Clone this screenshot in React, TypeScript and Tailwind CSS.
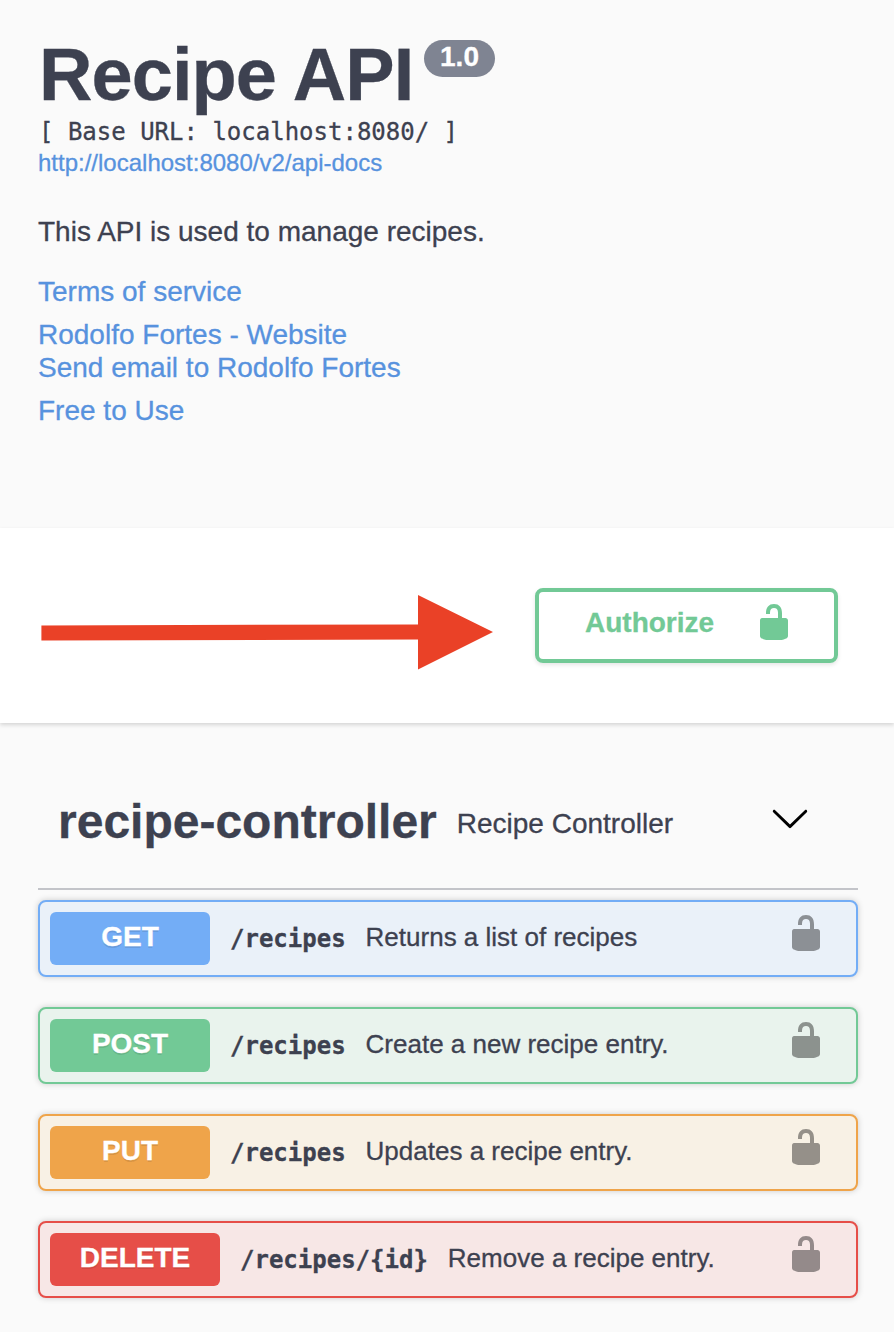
import React from "react";

const LOCK_PATH =
  "M15.8 8H14V5.6C14 2.703 12.665 1 10 1 7.334 1 6 2.703 6 5.6V6h2v-.801C8 3.754 8.797 3 10 3c1.203 0 2 .754 2 2.199V8H4c-.553 0-1 .646-1 1.199V17c0 .549.428 1.139.951 1.307l1.197.387C5.672 18.861 6.55 19 7.1 19h5.8c.549 0 1.428-.139 1.951-.307l1.196-.387c.524-.167.953-.757.953-1.306V9.199C17 8.646 16.352 8 15.8 8z";

function LockIcon({ className }: { className: string }) {
  return (
    <svg viewBox="0 0 20 20" className={"h-10 w-10 shrink-0 " + className} fill="currentColor">
      <path d={LOCK_PATH} />
    </svg>
  );
}

type Operation = {
  method: string;
  path: string;
  summary: string;
  box: string;
  badge: string;
};

const operations: Operation[] = [
  {
    method: "GET",
    path: "/recipes",
    summary: "Returns a list of recipes",
    box: "border-[#73adf6] bg-[#eaf1f9]",
    badge: "w-40 bg-[#73adf6]",
  },
  {
    method: "POST",
    path: "/recipes",
    summary: "Create a new recipe entry.",
    box: "border-[#72c996] bg-[#e9f3ed]",
    badge: "w-40 bg-[#72c996]",
  },
  {
    method: "PUT",
    path: "/recipes",
    summary: "Updates a recipe entry.",
    box: "border-[#efa44a] bg-[#f8f1e5]",
    badge: "w-40 bg-[#efa44a]",
  },
  {
    method: "DELETE",
    path: "/recipes/{id}",
    summary: "Remove a recipe entry.",
    box: "border-[#e64e48] bg-[#f7e7e6]",
    badge: "w-[170px] bg-[#e64e48]",
  },
];

function OperationRow({ op }: { op: Operation }) {
  return (
    <div
      className={
        "flex h-[77px] items-start rounded-lg border-2 pt-2.5 pl-2.5 pr-[30px] shadow-[0_0_6px_rgba(0,0,0,0.19)] " + op.box
      }
    >
      <span
        className={
          "h-[53px] shrink-0 rounded-md text-center text-[28px] leading-[49px] font-bold text-white [text-shadow:0_2px_0_rgba(0,0,0,0.1)] " +
          op.badge
        }
      >
        {op.method}
      </span>
      <span className="ml-5 font-['DejaVu_Sans_Mono',monospace] text-[24px] leading-[55px] font-bold">{op.path}</span>
      <span className="ml-5 grow text-[26px] leading-[50px]">{op.summary}</span>
      <LockIcon className="mt-px text-black/40" />
    </div>
  );
}

export default function App() {
  return (
    <div className="h-[1332px] w-[894px] overflow-hidden bg-[#fafafa] font-['Liberation_Sans',Arial,sans-serif] text-[#3d4150] [-webkit-text-stroke:0.3px]">
      <header className="h-[528px] px-[38px] pt-[35px]">
        <h1 className="flex h-20 items-start font-bold">
          <span className="w-[374px] pl-px text-[74px] leading-[79px] tracking-[-0.95px] whitespace-nowrap">Recipe API</span>
          <span className="mt-[5px] ml-3 h-[37px] w-[71px] rounded-full bg-[#7f8492] text-center text-[28px] leading-[33px] text-white">
            1.0
          </span>
        </h1>
        <div className="mt-px pl-px font-['DejaVu_Sans_Mono',monospace] text-[24px] leading-8">
          [ Base URL: localhost:8080/ ]
        </div>
        <div className="text-[24px] leading-[30px] text-[#5792de]">http://localhost:8080/v2/api-docs</div>
        <p className="mt-[38px] text-[28px] leading-8">This API is used to manage recipes.</p>
        <div className="mt-[27px] text-[28px] leading-[33px] text-[#5792de]">
          <div>Terms of service</div>
          <div className="mt-2.5">Rodolfo Fortes - Website</div>
          <div>Send email to Rodolfo Fortes</div>
          <div className="mt-2.5">Free to Use</div>
        </div>
      </header>

      <section className="flex h-[195px] items-start justify-between bg-white pr-14 pl-[41px] shadow-[0_2px_4px_rgba(0,0,0,0.15)]">
        <svg viewBox="0 0 452 75" className="mt-[67px] h-[75px] w-[452px]">
          <polygon points="0.4,30.4 377,29.4 377,0 452,37 377,74.5 377,44.5 0.4,45.6" fill="#ea4127" />
        </svg>
        <button className="mt-[60px] flex h-[75px] w-[303px] items-start rounded-lg border-4 border-[#72c996] pt-2.5 pl-[46px] text-[#72c996] shadow-[0_2px_4px_rgba(0,0,0,0.1)]">
          <span className="w-[129px] text-left text-[28px] leading-[42px] font-bold">Authorize</span>
          <LockIcon className="ml-10" />
        </button>
      </section>

      <main className="pr-9 pl-[38px]">
        <div className="flex h-[167px] items-start border-b-2 border-[#c3c4c9] pr-12 pl-5">
          <h2 className="mt-[69px] text-[48px] leading-[60px] font-bold">recipe-controller</h2>
          <span className="mt-[81px] ml-5 grow text-[28px] leading-10">Recipe Controller</span>
          <svg viewBox="0 0 20 20" className="mt-[75px] h-10 w-10 text-black" fill="currentColor">
            <path d="M17.418 6.109c.272-.268.709-.268.979 0s.271.701 0 .969l-7.908 7.83c-.27.268-.707.268-.979 0l-7.908-7.83c-.27-.268-.27-.701 0-.969.271-.268.709-.268.979 0L10 13.25l7.418-7.141z" />
          </svg>
        </div>
        <div className="mt-2.5 flex flex-col gap-[30px]">
          {operations.map((op) => (
            <OperationRow key={op.method} op={op} />
          ))}
        </div>
      </main>
    </div>
  );
}
